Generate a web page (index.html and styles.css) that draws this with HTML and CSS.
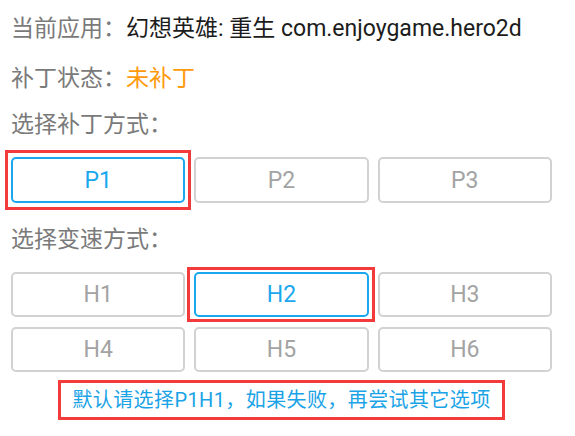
FILE: index.html
```html
<!DOCTYPE html>
<html lang="zh-CN">
<head>
    <meta charset="UTF-8">
    <meta name="viewport" content="width=device-width, initial-scale=1.0">
    <title>补丁设置</title>
    <link rel="stylesheet" href="styles.css">
</head>
<body>
    <main class="panel">
        <div class="line line-app">
            <span class="label">当前应用：</span><span class="value">幻想英雄: 重生 com.enjoygame.hero2d</span>
        </div>
        <div class="line line-state">
            <span class="label">补丁状态：</span><span class="value warn">未补丁</span>
        </div>
        <div class="line line-title">选择补丁方式：</div>

        <div class="choices choices-patch">
            <button class="choice selected marked">P1</button>
            <button class="choice">P2</button>
            <button class="choice">P3</button>
        </div>

        <div class="line line-title speed-title">选择变速方式：</div>

        <div class="choices choices-speed">
            <button class="choice">H1</button>
            <button class="choice selected marked marked-h">H2</button>
            <button class="choice">H3</button>
            <button class="choice">H4</button>
            <button class="choice">H5</button>
            <button class="choice">H6</button>
        </div>

        <div class="note-wrap">
            <p class="note">默认请选择P1H1，如果失败，再尝试其它选项</p>
        </div>
    </main>
</body>
</html>
```

FILE: styles.css
```css
* {
    margin: 0;
    padding: 0;
    box-sizing: border-box;
}

body {
    background: #fff;
    font-family: Roboto, "Noto Sans CJK SC", sans-serif;
    overflow: hidden;
}

.panel {
    display: flex;
    flex-direction: column;
    padding: 6px 23px 0 11px;
}

.line {
    height: 46px;
    line-height: 46px;
    font-size: 23px;
    color: #7a7a7a;
    white-space: nowrap;
}

.line-state {
    margin-top: 4px;
}

.value {
    color: #1c1c1c;
}

.value.warn {
    color: #ff9a0d;
}

.choices {
    display: grid;
    grid-template-columns: repeat(3, 1fr);
    gap: 10px 9px;
}

.choices-patch {
    margin-top: 9px;
}

.speed-title {
    margin-top: 14px;
}

.choices-speed {
    margin-top: 9px;
}

.choice {
    position: relative;
    height: 46px;
    background: #fff;
    border: 2px solid #d2d2d2;
    border-radius: 5px;
    font-family: Roboto, sans-serif;
    font-size: 23px;
    color: #a3a3a3;
}

.choices-speed .choice {
    height: 45px;
}

.choice.selected {
    border-color: #1aa7ee;
    color: #1aa7ee;
}

/* red annotation frames */
.marked::after {
    content: '';
    position: absolute;
    top: -9px;
    left: -8px;
    right: -8px;
    bottom: -9px;
    border: 3px solid #f33b3b;
    pointer-events: none;
}

.marked-h::after {
    top: -7px;
    left: -9px;
    right: -8px;
    bottom: -7px;
}

.note-wrap {
    display: flex;
    justify-content: center;
    margin-top: 8px;
}

.note {
    height: 40px;
    line-height: 34px;
    padding: 0 11px;
    border: 3px solid #f33b3b;
    font-size: 20px;
    letter-spacing: 0.4px;
    color: #1aa3e6;
    white-space: nowrap;
}
```
